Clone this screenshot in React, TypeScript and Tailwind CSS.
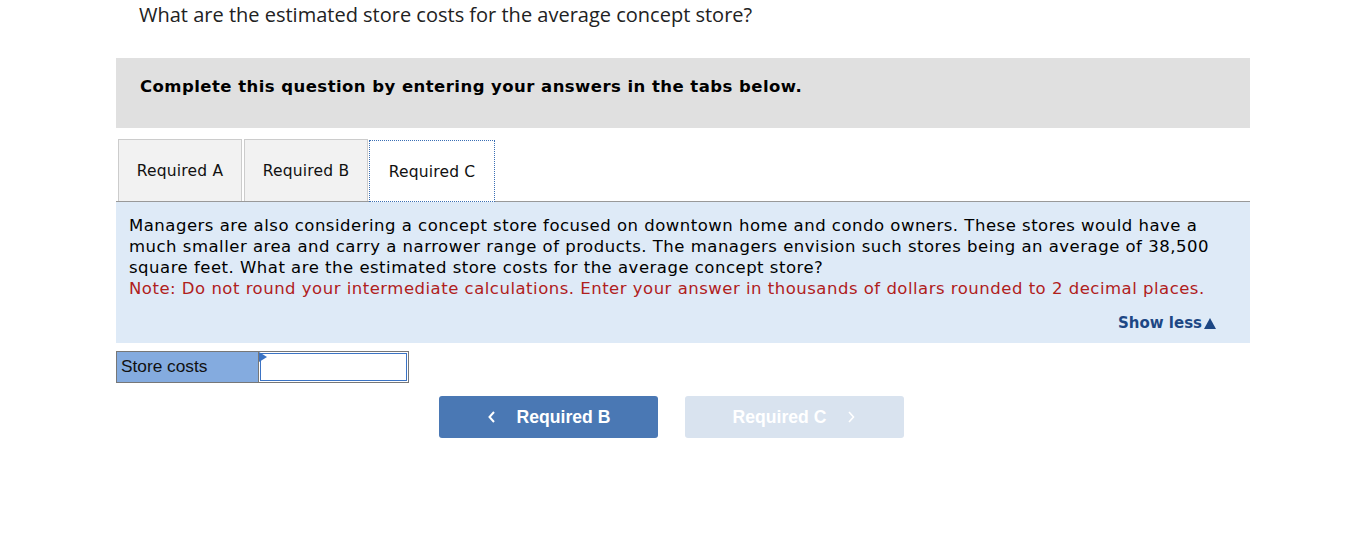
import React from 'react';

const verdana = { fontFamily: 'Verdana, "DejaVu Sans", sans-serif' };

const Tab: React.FC<{ label: string; active?: boolean }> = ({ label, active }) => (
  <div
    className={`h-[62px] pt-[3px] flex items-center justify-center text-[15.5px] tracking-[0.2px] text-[#111] ${
      active
        ? 'w-[126px] -ml-px bg-white border border-dotted border-[#3a6fb5] -mb-px relative z-10'
        : 'w-[124px] bg-[#f2f2f2] border border-[#cccccc] border-b-0'
    }`}
  >
    {label}
  </div>
);

export default function App() {
  return (
    <div className="w-[1350px] h-[556px] bg-white overflow-hidden">
      <div className="ml-[116px] w-[1134px]">
        <p
          className="pl-[23px] pt-[3px] text-[20px] leading-[24px] text-[#222]"
          style={{ fontFamily: '"Open Sans", "Liberation Sans", sans-serif' }}
        >
          What are the estimated store costs for the average concept store?
        </p>

        <div className="mt-[31px] h-[70px] bg-[#e0e0e0] pl-[24px] pt-[19px]" style={verdana}>
          <p className="text-[16.5px] tracking-[0.45px] font-bold leading-[20px] text-black">
            Complete this question by entering your answers in the tabs below.
          </p>
        </div>

        <div style={verdana}>
          <div className="mt-[11px] flex items-end gap-[2px] pl-[2px] border-b border-[#999999]">
            <Tab label="Required A" />
            <Tab label="Required B" />
            <Tab label="Required C" active />
          </div>

          <div className="bg-[#deeaf7] pl-[13px] pr-[20px] pt-[13px] pb-[9px] text-[16.5px] tracking-[0.5px] leading-[21px]">
            <p className="text-black">
              Managers are also considering a concept store focused on downtown home and condo owners. These stores would have a
              much smaller area and carry a narrower range of products. The managers envision such stores being an average of 38,500
              square feet. What are the estimated store costs for the average concept store?
            </p>
            <p className="text-[#b0201c] whitespace-nowrap">
              Note: Do not round your intermediate calculations. Enter your answer in thousands of dollars rounded to 2 decimal places.
            </p>
            <div className="mt-[14px] flex justify-end pr-[14px]">
              <span className="text-[15px] tracking-normal font-bold text-[#1d4784] flex items-center">
                Show less
                <svg width="12" height="11" viewBox="0 0 12 11" className="ml-[2px]">
                  <path d="M6 0 L12 11 L0 11 Z" fill="#1d4784" />
                </svg>
              </span>
            </div>
          </div>
        </div>

        <div
          className="mt-[8px] flex h-[32px] text-[17.3px]"
          style={{ fontFamily: '"Liberation Sans", Arial, sans-serif' }}
        >
          <div className="w-[142px] bg-[#84abdf] border border-[#777777] border-r-0 flex items-center pl-[4px] text-[#111]">
            Store costs
          </div>
          <div className="relative w-[151px] border border-[#777777] bg-white p-[1px]">
            <div className="w-full h-full border border-[#3b73c4]" />
            <svg width="8" height="10" viewBox="0 0 8 10" className="absolute left-0 top-0">
              <path d="M0 0 L8 5 L0 10 Z" fill="#3b73c4" />
            </svg>
          </div>
        </div>

        <div
          className="mt-[13px] ml-[323px] flex gap-[27px] text-[17.6px] font-bold"
          style={{ fontFamily: '"Liberation Sans", Arial, sans-serif' }}
        >
          <button className="w-[219px] h-[42px] rounded-[3px] bg-[#4a78b4] text-white flex items-center justify-center">
            <svg width="10" height="14" viewBox="0 0 10 14" className="mr-[20px]">
              <path d="M7 2 L2.5 7 L7 12" stroke="white" strokeWidth="2" fill="none" />
            </svg>
            Required B
          </button>
          <button className="w-[219px] h-[42px] rounded-[3px] bg-[#d9e3ef] text-white flex items-center justify-center">
            Required C
            <svg width="10" height="14" viewBox="0 0 10 14" className="ml-[20px]">
              <path d="M3 2 L7.5 7 L3 12" stroke="white" strokeWidth="1.6" fill="none" />
            </svg>
          </button>
        </div>
      </div>
    </div>
  );
}
